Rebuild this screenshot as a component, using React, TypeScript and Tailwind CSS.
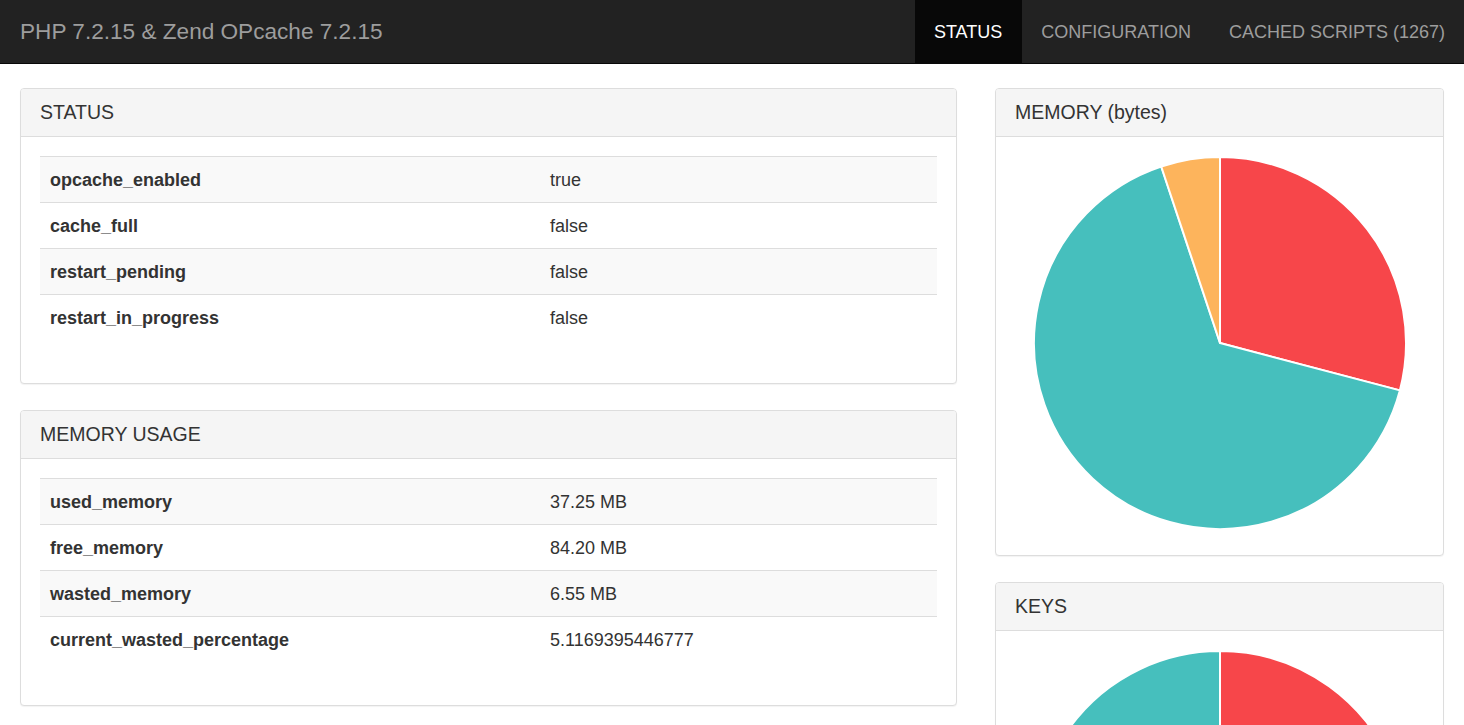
import React from "react";

type Row = [string, string];

const STATUS_ROWS: Row[] = [
  ["opcache_enabled", "true"],
  ["cache_full", "false"],
  ["restart_pending", "false"],
  ["restart_in_progress", "false"],
];

const MEMORY_ROWS: Row[] = [
  ["used_memory", "37.25 MB"],
  ["free_memory", "84.20 MB"],
  ["wasted_memory", "6.55 MB"],
  ["current_wasted_percentage", "5.1169395446777"],
];

const MEMORY_PIE = [
  { value: 37.25, color: "#F7464A" },
  { value: 84.2, color: "#46BFBD" },
  { value: 6.55, color: "#FDB45C" },
];

const KEYS_PIE = [
  { value: 40, color: "#F7464A" },
  { value: 60, color: "#46BFBD" },
];

function Pie({ data }: { data: { value: number; color: string }[] }) {
  const r = 186;
  const c = 188;
  const total = data.reduce((s, d) => s + d.value, 0);
  let start = 0;
  return (
    <svg width={376} height={376} viewBox="0 0 376 376">
      {data.map((d, i) => {
        const a0 = (start / total) * Math.PI * 2;
        start += d.value;
        const a1 = (start / total) * Math.PI * 2;
        const x0 = c + r * Math.sin(a0);
        const y0 = c - r * Math.cos(a0);
        const x1 = c + r * Math.sin(a1);
        const y1 = c - r * Math.cos(a1);
        const large = a1 - a0 > Math.PI ? 1 : 0;
        return (
          <path
            key={i}
            d={`M${c},${c} L${x0},${y0} A${r},${r} 0 ${large} 1 ${x1},${y1} Z`}
            fill={d.color}
            stroke="#fff"
            strokeWidth={2}
            strokeLinejoin="round"
          />
        );
      })}
    </svg>
  );
}

function Panel({ title, children }: { title: string; children: React.ReactNode }) {
  return (
    <div className="rounded-[4px] border border-[#dddddd] bg-white shadow-[0_1px_1px_rgba(0,0,0,0.05)]">
      <div className="h-[48px] rounded-t-[3px] border-b border-[#dddddd] bg-[#f5f5f5] px-[19px] flex items-center text-[19.5px] text-[#333]">
        {title}
      </div>
      {children}
    </div>
  );
}

function KVTable({ rows }: { rows: Row[] }) {
  return (
    <div className="px-[19px] pt-[19px] pb-[43px]">
      <table className="w-full border-collapse text-[18px] leading-[25px] text-[#333]">
        <tbody>
          {rows.map(([k, v], i) => (
            <tr key={k} className={i % 2 === 0 ? "bg-[#f9f9f9]" : "bg-white"}>
              <th className="w-[500px] border-t border-[#dddddd] px-[10px] pt-[11px] pb-[9px] text-left font-bold">{k}</th>
              <td className="border-t border-[#dddddd] px-[10px] pt-[11px] pb-[9px]">{v}</td>
            </tr>
          ))}
        </tbody>
      </table>
    </div>
  );
}

export default function App() {
  return (
    <div className="min-h-screen bg-white font-['Liberation_Sans',Arial,sans-serif]">
      <nav className="h-[64px] bg-[#222222] border-b border-[#080808] flex items-stretch justify-between">
        <div className="pl-[20px] pt-[1px] flex items-center text-[22.6px] text-[#9d9d9d]">PHP 7.2.15 &amp; Zend OPcache 7.2.15</div>
        <div className="flex items-stretch text-[18px] pt-[1px]">
          <a className="pl-[19px] pr-[20px] -mt-[1px] pt-[1px] flex items-center bg-[#080808] text-white">STATUS</a>
          <a className="px-[19px] flex items-center text-[#9d9d9d]">CONFIGURATION</a>
          <a className="px-[19px] flex items-center text-[#9d9d9d]">CACHED SCRIPTS (1267)</a>
        </div>
      </nav>

      <div className="px-[20px] pt-[24px] flex gap-[38px] items-start">
        <div className="flex-1 flex flex-col gap-[26px]">
          <Panel title="STATUS">
            <KVTable rows={STATUS_ROWS} />
          </Panel>
          <Panel title="MEMORY USAGE">
            <KVTable rows={MEMORY_ROWS} />
          </Panel>
        </div>

        <div className="w-[449px] flex flex-col gap-[26px]">
          <Panel title="MEMORY (bytes)">
            <div className="flex justify-center pt-[18px] pb-[24px]">
              <Pie data={MEMORY_PIE} />
            </div>
          </Panel>
          <Panel title="KEYS">
            <div className="flex justify-center pt-[18px] pb-[24px]">
              <Pie data={KEYS_PIE} />
            </div>
          </Panel>
        </div>
      </div>
    </div>
  );
}
